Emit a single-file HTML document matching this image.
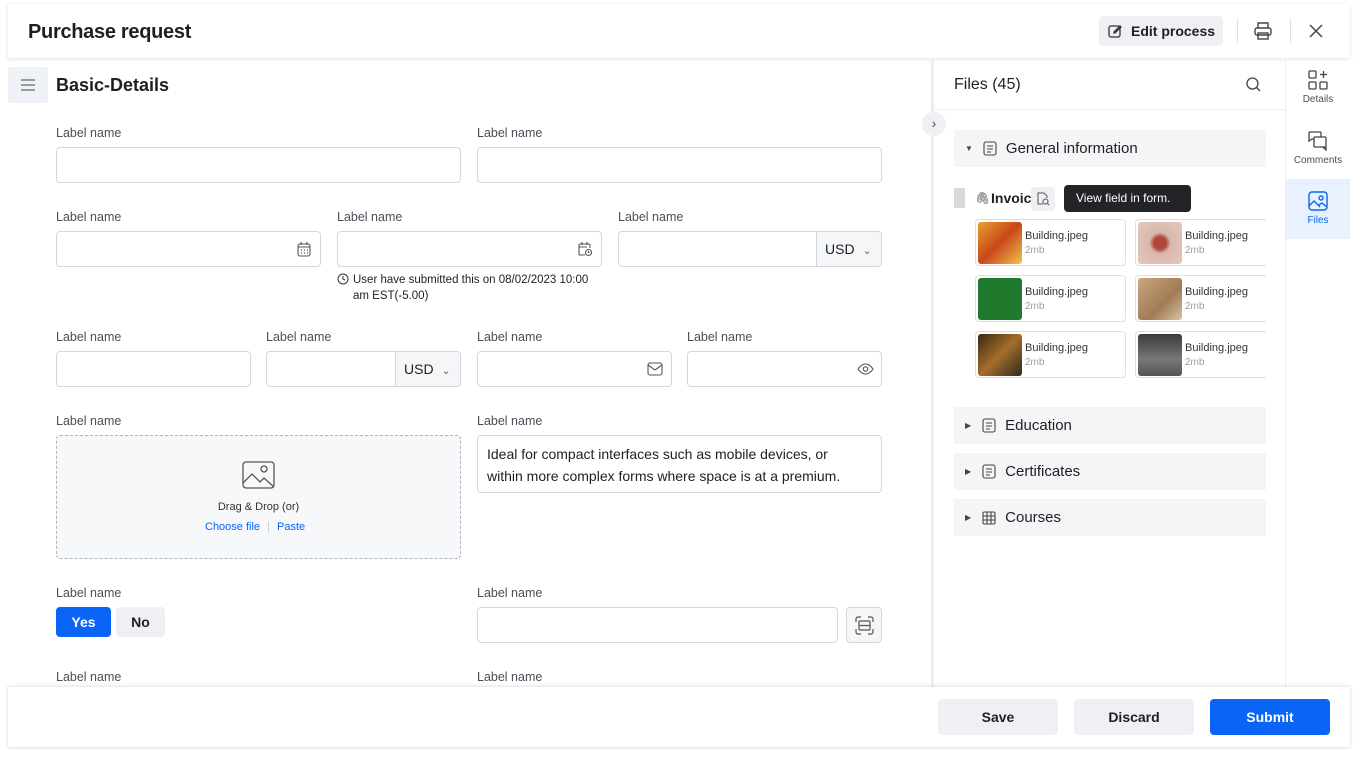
<!DOCTYPE html><html><head><style>
*{box-sizing:border-box;margin:0;padding:0}
body{width:1358px;height:758px;background:#fff;font-family:"Liberation Sans",sans-serif;color:#1d1f23;position:relative;overflow:hidden}
.a{position:absolute}
.lbl{position:absolute;font-size:12.5px;color:#4a4f57}
.in{position:absolute;border:1px solid #d3d7de;border-radius:4px;height:36px;background:#fff}
.btn{position:absolute;border-radius:4px;font-size:14px;font-weight:bold;display:flex;align-items:center;justify-content:center}
.grey{background:#eef0f3;color:#1d1f23}
.blue{background:#0a64f5;color:#fff}
.sec{position:absolute;left:954px;width:312px;height:37px;background:#f4f5f7;font-size:15px;display:flex;align-items:center}
.card{position:absolute;width:151px;height:47px;border:1px solid #dcdfe4;border-radius:4px;background:#fff}
.card .t{position:absolute;left:2px;top:2px;width:44px;height:42px;border-radius:3px}
.card .n{position:absolute;left:49px;top:10px;font-size:11px;color:#333}
.card .s{position:absolute;left:49px;top:25px;font-size:10px;color:#9aa0a8}
.tab{position:absolute;left:1286px;width:64px;font-size:10px;color:#4a4f57;text-align:center}
svg{display:block}
</style></head><body>
<!-- header -->
<div class="a" style="left:8px;top:4px;width:1342px;height:54px;background:#fff;box-shadow:0 1px 4px rgba(0,0,0,.12)"></div>
<div class="a" style="left:28px;top:21px;font-size:20px;font-weight:bold;letter-spacing:-.3px">Purchase request</div>
<div class="btn grey" style="left:1099px;top:16px;width:124px;height:30px;font-size:14px"><svg width="16" height="16" viewBox="0 0 16 16" style="margin-right:8px" fill="none" stroke="#333" stroke-width="1.3"><rect x="2" y="3" width="11" height="11" rx="2"/><path d="M7 9l6-6 1 1-6 6H7z"/></svg>Edit process</div>
<div class="a" style="left:1237px;top:19px;width:1px;height:24px;background:#dcdfe4"></div>
<div class="a" style="left:1290px;top:19px;width:1px;height:24px;background:#dcdfe4"></div>
<svg class="a" style="left:1253px;top:21px" width="20" height="20" viewBox="0 0 20 20" fill="none" stroke="#444" stroke-width="1.4"><path d="M5 7V2h10v5"/><rect x="2" y="7" width="16" height="7" rx="2"/><rect x="5" y="12" width="10" height="6"/></svg>
<svg class="a" style="left:1308px;top:23px" width="16" height="16" viewBox="0 0 16 16" stroke="#444" stroke-width="1.5"><path d="M2 2l12 12M14 2L2 14"/></svg>

<!-- left -->
<div class="a" style="left:8px;top:67px;width:40px;height:36px;background:#eef1f5;border-radius:3px"></div>
<svg class="a" style="left:21px;top:79px" width="14" height="12" viewBox="0 0 14 12" stroke="#666" stroke-width="1.3"><path d="M0 1h14M0 6h14M0 11h14"/></svg>
<div class="a" style="left:56px;top:75px;font-size:18px;font-weight:bold">Basic-Details</div>

<div class="lbl" style="left:56px;top:126px">Label name</div><div class="lbl" style="left:477px;top:126px">Label name</div>
<div class="in" style="left:56px;top:147px;width:405px"></div><div class="in" style="left:477px;top:147px;width:405px"></div>

<div class="lbl" style="left:56px;top:210px">Label name</div><div class="lbl" style="left:337px;top:210px">Label name</div><div class="lbl" style="left:618px;top:210px">Label name</div>
<div class="in" style="left:56px;top:231px;width:265px"><svg class="a" style="left:239px;top:9px" width="16" height="16" viewBox="0 0 16 16" fill="none" stroke="#555" stroke-width="1.1"><rect x="2" y="3" width="12" height="12" rx="2"/><path d="M5 1v3M11 1v3M2 6h12"/><path d="M5 9h1M8 9h1M11 9h1M5 12h1M8 12h1M11 12h1" stroke-width="1.3"/></svg></div>
<div class="in" style="left:337px;top:231px;width:265px"><svg class="a" style="left:239px;top:9px" width="16" height="16" viewBox="0 0 16 16" fill="none" stroke="#555" stroke-width="1.1"><path d="M8 14H3a1 1 0 0 1-1-1V4a1 1 0 0 1 1-1h9a1 1 0 0 1 1 1v3M5 1v3M10 1v3M2 6h8"/><circle cx="11.5" cy="11.5" r="3"/><path d="M11.5 10v1.5h1"/></svg></div>
<div class="in" style="left:618px;top:231px;width:264px;overflow:hidden"><div class="a" style="left:197px;top:0;width:66px;height:34px;background:#f5f6f8;border-left:1px solid #d3d7de;font-size:14px;padding:9px 0 0 8px">USD <span style="font-size:11px;color:#666;margin-left:4px">&#8964;</span></div></div>
<svg class="a" style="left:337px;top:273px" width="12" height="12" viewBox="0 0 12 12" fill="none" stroke="#333" stroke-width="1"><circle cx="6" cy="6" r="5"/><path d="M6 3v3l2 1"/></svg>
<div class="a" style="left:353px;top:272px;font-size:11.5px;line-height:16px;width:250px">User have submitted this on 08/02/2023 10:00 am EST(-5.00)</div>

<div class="lbl" style="left:56px;top:330px">Label name</div><div class="lbl" style="left:266px;top:330px">Label name</div><div class="lbl" style="left:477px;top:330px">Label name</div><div class="lbl" style="left:687px;top:330px">Label name</div>
<div class="in" style="left:56px;top:351px;width:195px"></div>
<div class="in" style="left:266px;top:351px;width:195px;overflow:hidden"><div class="a" style="left:128px;top:0;width:66px;height:34px;background:#f5f6f8;border-left:1px solid #d3d7de;font-size:14px;padding:9px 0 0 8px">USD <span style="font-size:11px;color:#666;margin-left:4px">&#8964;</span></div></div>
<div class="in" style="left:477px;top:351px;width:195px"><svg class="a" style="left:169px;top:10px" width="16" height="14" viewBox="0 0 16 14" fill="none" stroke="#555" stroke-width="1.1"><rect x="1" y="1" width="14" height="12" rx="2"/><path d="M1 3l7 5 7-5"/></svg></div>
<div class="in" style="left:687px;top:351px;width:195px"><svg class="a" style="left:169px;top:10px" width="17" height="14" viewBox="0 0 17 14" fill="none" stroke="#555" stroke-width="1.1"><path d="M1 7s3-5 7.5-5S16 7 16 7s-3 5-7.5 5S1 7 1 7z"/><circle cx="8.5" cy="7" r="2.2"/></svg></div>

<div class="lbl" style="left:56px;top:414px">Label name</div><div class="lbl" style="left:477px;top:414px">Label name</div>
<div class="a" style="left:56px;top:435px;width:405px;height:124px;border:1px dashed #aeb4bd;border-radius:4px;background:#f7f8fa"></div>
<svg class="a" style="left:242px;top:461px" width="33" height="28" viewBox="0 0 33 28" fill="none" stroke="#555" stroke-width="1.3"><rect x="1" y="1" width="31" height="26" rx="3"/><circle cx="22" cy="8" r="3"/><path d="M1 22l9-9 8 8 4-4 10 9"/></svg>
<div class="a" style="left:56px;top:501px;width:405px;text-align:center;font-size:11px;color:#333">Drag &amp; Drop (or)</div>
<div class="a" style="left:205px;top:521px;font-size:11px;color:#0a64f5">Choose file <span style="color:#ccc;margin:0 4px">|</span> Paste</div>
<div class="a" style="left:477px;top:435px;width:405px;height:58px;border:1px solid #d3d7de;border-radius:4px;padding:7px 9px;font-size:14px;line-height:22px"><div style="width:378px">Ideal for compact interfaces such as mobile devices, or within more complex forms where space is at a premium.</div></div>

<div class="lbl" style="left:56px;top:586px">Label name</div><div class="lbl" style="left:477px;top:586px">Label name</div>
<div class="btn blue" style="left:56px;top:607px;width:55px;height:30px">Yes</div>
<div class="btn grey" style="left:116px;top:607px;width:49px;height:30px">No</div>
<div class="in" style="left:477px;top:607px;width:361px"></div>
<div class="a" style="left:846px;top:607px;width:36px;height:36px;border:1px solid #d3d7de;border-radius:4px;background:#f5f6f8"><svg class="a" style="left:8px;top:8px" width="19" height="19" viewBox="0 0 19 19" fill="none" stroke="#555" stroke-width="1.2"><path d="M1 6V3a2 2 0 0 1 2-2h3M13 1h3a2 2 0 0 1 2 2v3M18 13v3a2 2 0 0 1-2 2h-3M6 18H3a2 2 0 0 1-2-2v-3M4 9.5h11"/><rect x="4" y="5" width="11" height="9" rx="1"/></svg></div>
<div class="lbl" style="left:56px;top:670px">Label name</div><div class="lbl" style="left:477px;top:670px">Label name</div>

<!-- right panel -->
<div class="a" style="left:931px;top:60px;width:3px;height:628px;background:#eceef1"></div>
<div class="a" style="left:922px;top:112px;width:24px;height:24px;border-radius:50%;background:#eef0f3;font-size:14px;color:#555;text-align:center;line-height:22px">&#8250;</div>
<div class="a" style="left:954px;top:76px;font-size:16px">Files (45)</div>
<svg class="a" style="left:1246px;top:77px" width="15" height="15" viewBox="0 0 15 15" fill="none" stroke="#444" stroke-width="1.3"><circle cx="6.5" cy="6.5" r="5.5"/><path d="M10.5 10.5L14 14"/></svg>
<div class="a" style="left:934px;top:109px;width:351px;height:1px;background:#eceef1"></div>

<div class="sec" style="top:130px"><span style="margin:0 10px 0 11px;font-size:8px;color:#444">&#9660;</span><svg width="14" height="15" viewBox="0 0 14 15" fill="none" stroke="#444" stroke-width="1.1" style="margin-right:9px"><rect x="1" y="1" width="12" height="13" rx="2"/><path d="M4 5h6M4 8h6M4 11h4"/></svg>General information</div>
<div class="a" style="left:954px;top:188px;width:11px;height:20px;background:#d9d9d9"></div>
<div class="a" style="left:975px;top:191px;font-size:12px;color:#555">&#x1F587;</div>
<div class="a" style="left:991px;top:190px;font-size:14px;font-weight:bold">Invoic</div>
<div class="a" style="left:1031px;top:187px;width:24px;height:24px;background:#eef0f3;border-radius:3px"><svg class="a" style="left:5px;top:5px" width="14" height="14" viewBox="0 0 14 14" fill="none" stroke="#555" stroke-width="1"><path d="M7 12H2V1h6l3 3v2"/><circle cx="9.5" cy="9.5" r="2.5"/><path d="M11.5 11.5L13 13"/></svg></div>
<div class="a" style="left:1058px;top:193px;width:0;height:0;border:6px solid transparent;border-right-color:#222"></div>
<div class="a" style="left:1064px;top:185px;width:127px;height:27px;background:#222427;border-radius:4px;color:#fff;font-size:12px;line-height:27px;padding-left:12px">View field in form.</div>

<div class="a" style="left:934px;top:215px;width:332px;height:170px;overflow:hidden">
<div class="card" style="left:41px;top:4px"><div class="t" style="background:linear-gradient(135deg,#e8a22c,#c9471a 50%,#f1c44a)"></div><div class="n">Building.jpeg</div><div class="s">2mb</div></div>
<div class="card" style="left:201px;top:4px"><div class="t" style="background:radial-gradient(circle at 50% 50%,#b0473b 20%,#d9b8ab 35%,#e5c9bd)"></div><div class="n">Building.jpeg</div><div class="s">2mb</div></div>
<div class="card" style="left:41px;top:60px"><div class="t" style="background:#1f7a2e"></div><div class="n">Building.jpeg</div><div class="s">2mb</div></div>
<div class="card" style="left:201px;top:60px"><div class="t" style="background:linear-gradient(135deg,#c9a77e,#a07c56 60%,#d8c2a0)"></div><div class="n">Building.jpeg</div><div class="s">2mb</div></div>
<div class="card" style="left:41px;top:116px"><div class="t" style="background:linear-gradient(135deg,#3a2a14,#a56d2a 50%,#2d2a1e)"></div><div class="n">Building.jpeg</div><div class="s">2mb</div></div>
<div class="card" style="left:201px;top:116px"><div class="t" style="background:linear-gradient(180deg,#3c3c3c,#777 60%,#555)"></div><div class="n">Building.jpeg</div><div class="s">2mb</div></div>
</div>

<div class="sec" style="top:407px"><span style="margin:0 11px 0 11px;font-size:8px;color:#444">&#9654;</span><svg width="14" height="15" viewBox="0 0 14 15" fill="none" stroke="#444" stroke-width="1.1" style="margin-right:9px"><rect x="1" y="1" width="12" height="13" rx="2"/><path d="M4 5h6M4 8h6M4 11h4"/></svg>Education</div>
<div class="sec" style="top:453px"><span style="margin:0 11px 0 11px;font-size:8px;color:#444">&#9654;</span><svg width="14" height="15" viewBox="0 0 14 15" fill="none" stroke="#444" stroke-width="1.1" style="margin-right:9px"><rect x="1" y="1" width="12" height="13" rx="2"/><path d="M4 5h6M4 8h6M4 11h4"/></svg>Certificates</div>
<div class="sec" style="top:499px"><span style="margin:0 11px 0 11px;font-size:8px;color:#444">&#9654;</span><svg width="14" height="14" viewBox="0 0 14 14" fill="none" stroke="#444" stroke-width="1.1" style="margin-right:9px"><rect x="1" y="1" width="12" height="12" rx="1.5"/><path d="M1 5h12M1 9h12M5 1v12M9 1v12"/></svg>Courses</div>

<!-- side tabs -->
<div class="a" style="left:1285px;top:60px;width:1px;height:628px;background:#eceef1"></div>
<div class="tab" style="top:70px"><svg style="margin:0 auto 4px" width="20" height="20" viewBox="0 0 20 20" fill="none" stroke="#444" stroke-width="1.3"><rect x="1" y="1" width="7" height="7" rx="1"/><rect x="1" y="12" width="7" height="7" rx="1"/><rect x="12" y="12" width="7" height="7" rx="1"/><path d="M15.5 1v7M12 4.5h7"/></svg>Details</div>
<div class="tab" style="top:131px"><svg style="margin:0 auto 4px" width="20" height="20" viewBox="0 0 20 20" fill="none" stroke="#444" stroke-width="1.3"><path d="M2 1h10a1 1 0 0 1 1 1v4M2 1a1 1 0 0 0-1 1v8l3-2h2"/><rect x="6" y="6" width="12" height="10" rx="1"/><path d="M15 16l3 3v-3"/></svg>Comments</div>
<div class="a" style="left:1286px;top:179px;width:64px;height:60px;background:#e8f1fd"></div>
<div class="tab" style="top:191px;color:#0a64f5"><svg style="margin:0 auto 4px" width="20" height="20" viewBox="0 0 20 20" fill="none" stroke="#0a64f5" stroke-width="1.4"><rect x="1" y="1" width="18" height="18" rx="3"/><circle cx="13" cy="7" r="2"/><path d="M1 15l5-5 6 6M11 14l3-2 5 4"/></svg>Files</div>

<!-- footer -->
<div class="a" style="left:8px;top:687px;width:1342px;height:60px;background:#fff;box-shadow:0 -1px 4px rgba(0,0,0,.1),0 1px 3px rgba(0,0,0,.1)"></div>
<div class="btn grey" style="left:938px;top:699px;width:120px;height:36px">Save</div>
<div class="btn grey" style="left:1074px;top:699px;width:120px;height:36px">Discard</div>
<div class="btn blue" style="left:1210px;top:699px;width:120px;height:36px">Submit</div>
</body></html>
